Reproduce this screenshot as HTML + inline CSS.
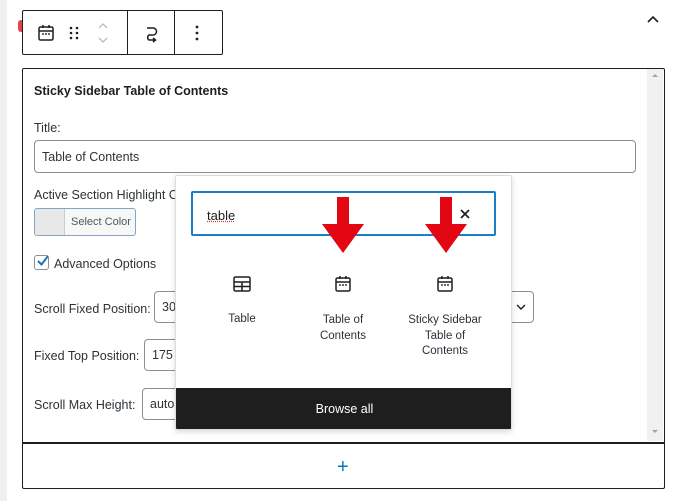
<!DOCTYPE html>
<html><head><style>
*{box-sizing:border-box;margin:0;padding:0}
body{width:680px;height:501px;background:#fff;font-family:"Liberation Sans",sans-serif;color:#1e1e1e;position:relative;overflow:hidden;font-size:13px}
.a{position:absolute}
.inp{position:absolute;border:1px solid #8c8f94;border-radius:4px;background:#fff;font-size:12.5px;color:#2c3338;padding-left:7px;display:flex;align-items:center}
.lbl{position:absolute;font-size:12.5px;color:#2c3338}
</style></head><body>
<div class="a" style="left:0;top:0;width:7px;height:501px;background:#f0f0f0"></div>
<div class="a" style="left:18px;top:20px;width:6px;height:12px;background:#e0474c;border-radius:3px 0 0 3px"></div>
<div class="a" style="left:22px;top:10px;width:201px;height:45px;border:1px solid #1e1e1e;border-radius:2px;background:#fff"></div>
<div class="a" style="left:127px;top:10px;width:1px;height:45px;background:#1e1e1e"></div>
<div class="a" style="left:174px;top:10px;width:1px;height:45px;background:#1e1e1e"></div>
<svg class="a" style="left:36px;top:23px" width="20" height="20" viewBox="0 0 20 20"><rect x="3" y="4" width="14" height="13" rx="1.5" fill="none" stroke="#1e1e1e" stroke-width="1.5"/><line x1="3" y1="8" x2="17" y2="8" stroke="#1e1e1e" stroke-width="1.5"/><line x1="7" y1="2" x2="7" y2="5" stroke="#1e1e1e" stroke-width="1.5"/><line x1="13" y1="2" x2="13" y2="5" stroke="#1e1e1e" stroke-width="1.5"/><circle cx="7" cy="11" r=".9"/><circle cx="10" cy="11" r=".9"/><circle cx="13" cy="11" r=".9"/></svg>
<svg class="a" style="left:68px;top:25px" width="12" height="16"><g fill="#1e1e1e"><circle cx="3" cy="3" r="1.3"/><circle cx="9" cy="3" r="1.3"/><circle cx="3" cy="8" r="1.3"/><circle cx="9" cy="8" r="1.3"/><circle cx="3" cy="13" r="1.3"/><circle cx="9" cy="13" r="1.3"/></g></svg>
<svg class="a" style="left:96px;top:20px" width="14" height="26"><path d="M3 8 L7 4 L11 8 M3 18 L7 22 L11 18" fill="none" stroke="#bbb" stroke-width="1.3"/></svg>
<svg class="a" style="left:141px;top:23px" width="20" height="20" viewBox="0 0 20 20"><path d="M6 5 H12 A3.5 3.5 0 0 1 12 12 H8 A3 3 0 0 0 8 17 H14 M12 15 L14.5 17 L12 19" fill="none" stroke="#1e1e1e" stroke-width="1.5"/></svg>
<svg class="a" style="left:193px;top:24px" width="8" height="18"><g fill="#1e1e1e"><circle cx="4" cy="3" r="1.4"/><circle cx="4" cy="9" r="1.4"/><circle cx="4" cy="15" r="1.4"/></g></svg>
<svg class="a" style="left:645px;top:13px" width="16" height="12"><path d="M3 9 L8 4 L13 9" fill="none" stroke="#1e1e1e" stroke-width="1.6"/></svg>

<div class="a" style="left:22px;top:68px;width:643px;height:421px;border:1px solid #1e1e1e;border-radius:2px"></div>
<div class="a" style="left:22px;top:442px;width:643px;height:1.5px;background:#1e1e1e"></div>
<div class="a" style="left:647px;top:69px;width:16px;height:372px;background:#f1f1f1"></div>
<svg class="a" style="left:650px;top:72px" width="10" height="6"><path d="M2 5 L5 2 L8 5Z" fill="#a3a3a3"/></svg>
<svg class="a" style="left:650px;top:429px" width="10" height="6"><path d="M2 1 L5 4 L8 1Z" fill="#a3a3a3"/></svg>
<div class="a" style="left:337px;top:456px;color:#007cba;font-size:20px">+</div>

<div class="a" style="left:34px;top:84px;font-weight:bold;font-size:12.5px;color:#1e1e1e">Sticky Sidebar Table of Contents</div>
<div class="lbl" style="left:34px;top:121px">Title:</div>
<div class="inp" style="left:34px;top:140px;width:602px;height:33px">Table of Contents</div>
<div class="lbl" style="left:34px;top:188px">Active Section Highlight C</div>
<div class="a" style="left:34px;top:208px;width:102px;height:28px;border:1px solid #7fa7c7;border-radius:3px;background:#f6f7f7;overflow:hidden"><div style="position:absolute;left:0;top:0;width:30px;height:100%;background:#e8e8e8;border-right:1px solid #ccc"></div><span style="position:absolute;left:36px;top:7px;font-size:11px;color:#50575e">Select Color</span></div>
<div class="a" style="left:34px;top:255px;width:15px;height:15px;border:1px solid #8c8f94;border-radius:3px"></div>
<svg class="a" style="left:35px;top:253px" width="16" height="16"><path d="M3 8 L6.5 11.5 L13 3" fill="none" stroke="#2271b1" stroke-width="2"/></svg>
<div class="lbl" style="left:54px;top:257px">Advanced Options</div>
<div class="lbl" style="left:34px;top:302px">Scroll Fixed Position:</div>
<div class="inp" style="left:154px;top:291px;width:380px;height:32px">30</div>
<svg class="a" style="left:514px;top:301px" width="14" height="12"><path d="M3 4 L7 8 L11 4" fill="none" stroke="#1e1e1e" stroke-width="1.4"/></svg>
<div class="lbl" style="left:34px;top:349px">Fixed Top Position:</div>
<div class="inp" style="left:144px;top:339px;width:100px;height:32px">175</div>
<div class="lbl" style="left:34px;top:398px">Scroll Max Height:</div>
<div class="inp" style="left:142px;top:388px;width:100px;height:32px">auto</div>

<div class="a" style="left:175px;top:175px;width:337px;height:255px;background:#fff;border:1px solid #ddd;border-radius:2px;box-shadow:0 2px 6px rgba(0,0,0,.15);overflow:hidden">
 <div class="a" style="left:15px;top:15px;width:305px;height:45px;border:2px solid #1a7fc4;border-radius:2px"></div>
 <div class="a" style="left:31px;top:32px;font-size:13px;color:#1e1e1e;text-decoration:underline dotted #d63638">table</div>
 <svg class="a" style="left:282px;top:31px" width="14" height="14"><path d="M3 3 L11 11 M11 3 L3 11" stroke="#1e1e1e" stroke-width="1.7"/></svg>
 <svg class="a" style="left:56px;top:98px" width="20" height="20" viewBox="0 0 20 20"><rect x="2" y="3" width="16" height="14" rx="1.5" fill="none" stroke="#1e1e1e" stroke-width="1.5"/><path d="M2 8 H18 M2 12.5 H18 M10 8 V17" stroke="#1e1e1e" stroke-width="1.5"/></svg>
 <div class="a" style="left:26px;top:137px;width:80px;text-align:center;font-size:11.5px;color:#2c3338">Table</div>
 <svg class="a" style="left:157px;top:98px" width="20" height="20" viewBox="0 0 20 20"><rect x="3" y="4" width="14" height="13" rx="1.5" fill="none" stroke="#1e1e1e" stroke-width="1.5"/><line x1="3" y1="8" x2="17" y2="8" stroke="#1e1e1e" stroke-width="1.5"/><line x1="7" y1="2" x2="7" y2="5" stroke="#1e1e1e" stroke-width="1.5"/><line x1="13" y1="2" x2="13" y2="5" stroke="#1e1e1e" stroke-width="1.5"/><circle cx="7" cy="11" r=".9"/><circle cx="10" cy="11" r=".9"/><circle cx="13" cy="11" r=".9"/></svg>
 <div class="a" style="left:127px;top:137px;width:80px;text-align:center;font-size:11.5px;line-height:15.5px;color:#2c3338">Table of<br>Contents</div>
 <svg class="a" style="left:259px;top:98px" width="20" height="20" viewBox="0 0 20 20"><rect x="3" y="4" width="14" height="13" rx="1.5" fill="none" stroke="#1e1e1e" stroke-width="1.5"/><line x1="3" y1="8" x2="17" y2="8" stroke="#1e1e1e" stroke-width="1.5"/><line x1="7" y1="2" x2="7" y2="5" stroke="#1e1e1e" stroke-width="1.5"/><line x1="13" y1="2" x2="13" y2="5" stroke="#1e1e1e" stroke-width="1.5"/><circle cx="7" cy="11" r=".9"/><circle cx="10" cy="11" r=".9"/><circle cx="13" cy="11" r=".9"/></svg>
 <div class="a" style="left:224px;top:137px;width:90px;text-align:center;font-size:11.5px;line-height:15.5px;color:#2c3338">Sticky Sidebar<br>Table of<br>Contents</div>
 <div class="a" style="left:0;top:212px;width:337px;height:43px;background:#1e1e1e;color:#fff;font-size:12.5px;text-align:center;line-height:43px">Browse all</div>
</div>
<svg class="a" style="left:320px;top:197px" width="46" height="58"><path d="M17 0 H29 V27 H44 L23 56 L2 27 H17Z" fill="#e30613"/></svg>
<svg class="a" style="left:423px;top:197px" width="46" height="58"><path d="M17 0 H29 V27 H44 L23 56 L2 27 H17Z" fill="#e30613"/></svg>
</body></html>
